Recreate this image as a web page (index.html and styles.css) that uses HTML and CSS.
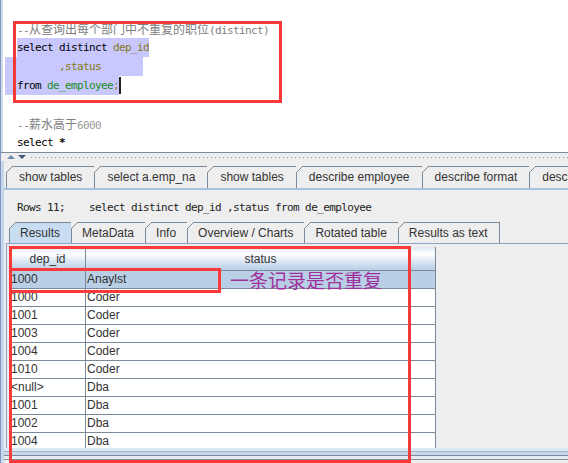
FILE: index.html
```html
<!DOCTYPE html>
<html lang="zh">
<head>
<meta charset="utf-8">
<title>SQL</title>
<link rel="stylesheet" href="styles.css">
</head>
<body>
<div class="app">
  <div class="editor">
    <div class="line"><span class="cm">--<span class="cjk">从查询出每个部门中不重复的职位</span>(distinct)</span></div>
    <div class="line"><span class="sel">select distinct <span class="ol">dep_id</span></span></div>
    <div class="line"><span class="sel sel-wide">       <span class="ol">,status</span>       </span></div>
    <div class="line"><span class="sel sel-wide">from <span class="gr">de_employee</span><span class="ol">;</span></span><span class="caret"></span></div>
    <div class="line"></div>
    <div class="line"><span class="cm">--<span class="cjk">薪水高于</span><span class="num">6000</span></span></div>
    <div class="line">select <b>*</b></div>
  </div>
  <div class="splitter">
    <svg class="arrows" width="28" height="8" viewBox="0 0 28 8">
      <polygon points="6,6 10,2 14,6" fill="#6d86b4"/>
      <polygon points="17,2 25,2 21,6" fill="#45577a"/>
    </svg>
  </div>
  <div class="lower">
    <div class="tabstrip top">
      <div class="tab">show tables</div>
      <div class="tab">select a.emp_na</div>
      <div class="tab">show tables</div>
      <div class="tab">describe employee</div>
      <div class="tab">describe format</div>
      <div class="tab">describe</div>
    </div>
    <div class="panel">
      <div class="rowsinfo">Rows 11;    select distinct dep_id ,status from de_employee</div>
      <div class="tabstrip inner">
        <div class="tab selected">Results</div>
        <div class="tab">MetaData</div>
        <div class="tab">Info</div>
        <div class="tab">Overview / Charts</div>
        <div class="tab">Rotated table</div>
        <div class="tab last">Results as text</div>
      </div>
      <div class="results-body">
        <div class="viewport">
          <table class="grid">
            <thead>
              <tr><th class="c1">dep_id</th><th class="c2">status</th></tr>
            </thead>
            <tbody>
              <tr class="picked"><td>1000</td><td>Anaylst</td></tr>
              <tr><td>1000</td><td>Coder</td></tr>
              <tr><td>1001</td><td>Coder</td></tr>
              <tr><td>1003</td><td>Coder</td></tr>
              <tr><td>1004</td><td>Coder</td></tr>
              <tr><td>1010</td><td>Coder</td></tr>
              <tr><td>&lt;null&gt;</td><td>Dba</td></tr>
              <tr><td>1001</td><td>Dba</td></tr>
              <tr><td>1002</td><td>Dba</td></tr>
              <tr><td>1004</td><td>Dba</td></tr>
            </tbody>
          </table>
        </div>
      </div>
      <div class="bottom"></div>
    </div>
  </div>
</div>

<div class="mark mark-editor"></div>
<div class="mark mark-table"></div>
<div class="mark mark-row"></div>
<div class="note">一条记录是否重复</div>
</body>
</html>
```

FILE: styles.css
```css
html, body {
  margin: 0;
  padding: 0;
}
body {
  width: 568px;
  height: 463px;
  overflow: hidden;
  background: #eeeeee;
  font-family: "Liberation Sans", Arial, sans-serif;
  position: relative;
}
.app {
  height: 463px;
  display: flex;
  flex-direction: column;
  border-left: 1px solid #8096be;
  box-sizing: border-box;
}

/* editor */
.editor {
  height: 152px;
  flex: none;
  box-sizing: border-box;
  background: #ffffff;
  border-left: 2px solid #cfdcec;
  padding: 19px 0 0 14px;
  font-family: "DejaVu Sans Mono", "Noto Sans CJK SC", monospace;
  font-size: 11px;
  letter-spacing: -0.62px;
  color: #000;
  overflow: hidden;
}
.line {
  height: 19px;
  line-height: 19px;
  white-space: pre;
}
.cm { color: #808080; }
.cjk {
  font-family: "Noto Sans CJK SC", sans-serif;
  font-size: 12px;
  letter-spacing: 0;
}
.num { color: #9a9a9a; }
.ol { color: #857a14; }
.gr { color: #1c8c1c; }
.line b { font-weight: bold; }
.sel {
  display: inline-block;
  height: 19px;
  background: #c8c8ff;
  vertical-align: top;
}
.sel-wide {
  margin-left: -12px;
  padding-left: 12px;
}
.caret {
  display: inline-block;
  width: 2px;
  height: 17px;
  margin-top: 1px;
  background: #222;
  vertical-align: top;
}

/* splitter */
.splitter {
  height: 9px;
  flex: none;
  box-sizing: border-box;
  border-top: 1px solid #7a8a99;
  background-color: #eeeeee;
  background-image: repeating-linear-gradient(90deg, #8e9aa8 0 1px, transparent 1px 4px);
  background-size: 100% 1px;
  background-position: 30px 4px;
  background-repeat: no-repeat;
}
.arrows { display: block; }

/* lower area */
.lower {
  flex: 1;
  display: flex;
  flex-direction: column;
  border-left: 3px solid #c5d7ec;
  min-height: 0;
}
.tabstrip {
  display: flex;
  align-items: flex-end;
  flex: none;
}
.tabstrip.top {
  height: 27px;
  padding-left: 2px;
  overflow: hidden;
}
.tabstrip.inner {
  height: 21px;
  padding-left: 5px;
}
.tab {
  position: relative;
  flex: none;
  box-sizing: border-box;
  height: 22px;
  line-height: 21px;
  border-top: 1px solid #7a8a99;
  border-left: 1px solid #7a8a99;
  background: #eeeeee;
  font-size: 12px;
  color: #333333;
  white-space: nowrap;
}
.top .tab { padding: 0 12px; }
.inner .tab {
  height: 21px;
  line-height: 20px;
  padding: 0 11px 0 10px;
}
.tab::before {
  content: "";
  position: absolute;
  left: -1px;
  top: -1px;
  width: 7px;
  height: 7px;
  background: linear-gradient(to bottom right, #eeeeee 0 calc(50% - 0.7px), #7a8a99 calc(50% - 0.7px) calc(50% + 0.7px), transparent calc(50% + 0.7px));
}
.tab.selected { background: #c8ddf2; }
.tab.last { border-right: 1px solid #7a8a99; }

.panel {
  flex: 1;
  display: flex;
  flex-direction: column;
  border-top: 2px solid #a8c0e0;
  min-height: 0;
  padding-bottom: 3px;
}
.rowsinfo {
  height: 32px;
  box-sizing: border-box;
  padding: 11px 0 0 13px;
  line-height: 14px;
  font-family: "DejaVu Sans Mono", monospace;
  font-size: 11px;
  letter-spacing: -0.62px;
  color: #222;
  white-space: pre;
}
.results-body {
  flex: none;
  margin-left: 2px;
  border-left: 1px solid #8aa0c0;
  border-top: 1px solid #8aa4c8;
  padding: 3px 0 0 3px;
}
.viewport {
  height: 201px;
  overflow: hidden;
}
.grid {
  border-collapse: separate;
  border-spacing: 0;
  table-layout: fixed;
  width: 426px;
  background: #ffffff;
  font-size: 12px;
  color: #333333;
}
.grid th {
  box-sizing: border-box;
  height: 24px;
  padding: 0;
  font-weight: normal;
  text-align: center;
  border-right: 1px solid #7a8a99;
  border-bottom: 1px solid #7a8a99;
  background: linear-gradient(to bottom, #dde8f3 0%, #ffffff 30%, #dde8f3 60%, #b8cfe5 100%);
}
.grid .c1 { width: 76px; }
.grid .c2 { width: 350px; }
.grid td {
  height: 17px;
  line-height: 17px;
  padding: 0 0 0 1px;
  border-right: 1px solid #7a8a99;
  border-bottom: 1px solid #7a8a99;
  white-space: nowrap;
  overflow: hidden;
}
.grid tr.picked td { background: #b8cfe5; }

.bottom {
  height: 12px;
  flex: none;
  background: linear-gradient(to bottom, #dde8f3 0 3px, #a3b8cc 3px 4px, #c8d8ea 4px 7px, #7a8a99 7px 8px, #e6ecf3 8px 11px, #8a8a8a 11px 12px);
}

/* annotations */
.mark {
  position: absolute;
  box-sizing: border-box;
  border: 3px solid #fa3a3a;
}
.mark-editor { left: 13px; top: 21px; width: 269px; height: 82px; }
.mark-table { left: 9px; top: 246px; width: 402px; height: 217px; }
.mark-row { left: 9px; top: 268px; width: 212px; height: 25px; }
.note {
  position: absolute;
  left: 230px;
  top: 270px;
  font-family: "Noto Sans CJK SC", sans-serif;
  font-size: 19px;
  line-height: 20px;
  color: #a0309c;
  white-space: nowrap;
}
```
